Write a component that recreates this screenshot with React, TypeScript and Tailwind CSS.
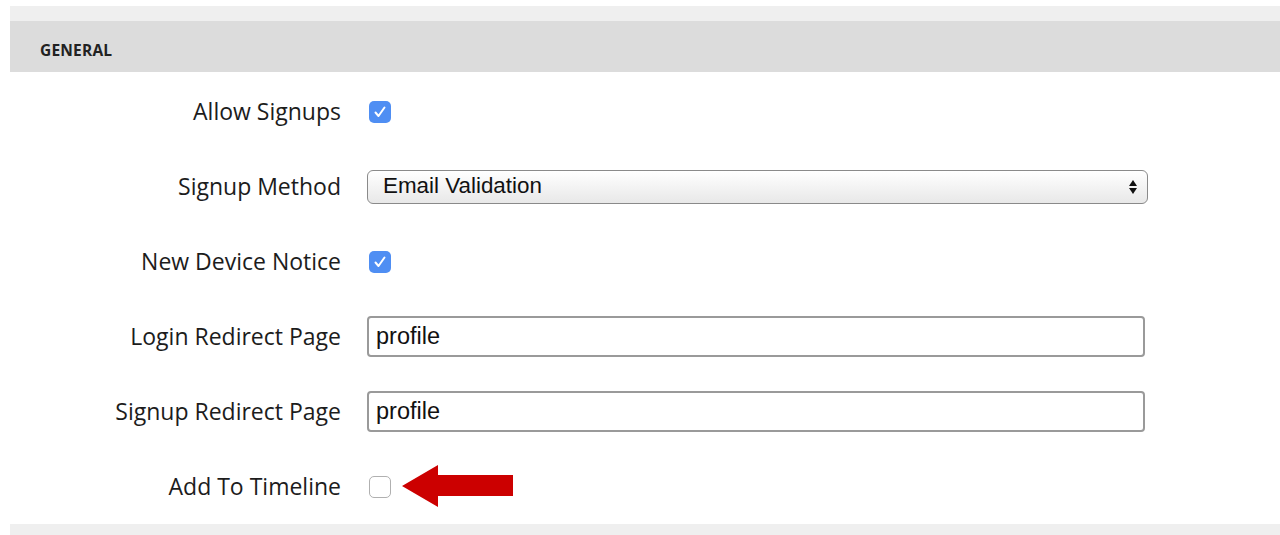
import React from "react";

const labelCls =
  "w-[331px] text-right text-[23px] text-[#1c1c1c] leading-none font-['Open_Sans',sans-serif]";

function Checked() {
  return (
    <div className="ml-[28px] w-[22px] h-[22px] rounded-[5px] bg-[#4f8ef3] flex items-center justify-center">
      <svg width="14" height="14" viewBox="0 0 14 14">
        <path d="M2.5 7.5 L5.5 11 L11.5 2.5" fill="none" stroke="white" strokeWidth="2" strokeLinecap="round" strokeLinejoin="round" />
      </svg>
    </div>
  );
}

export default function App() {
  return (
    <div className="w-full h-[535px] bg-white pt-[6px] pl-[10px] overflow-hidden">
      <div className="h-[15px] bg-[#efefef]" />
      <div className="h-[51px] bg-[#dcdcdc] flex items-center pl-[30px] pt-[8px]">
        <span className="text-[15.5px] font-bold text-[#222] font-['Open_Sans',sans-serif] tracking-[0.2px]">GENERAL</span>
      </div>
      <div className="pt-[2px]">
        <div className="h-[75px] flex items-center">
          <div className={labelCls}>Allow Signups</div>
          <Checked />
        </div>
        <div className="h-[75px] flex items-center">
          <div className={labelCls}>Signup Method</div>
          <div className="ml-[26px] w-[781px] h-[34px] rounded-[6px] border border-[#8a8a8a] bg-gradient-to-b from-white to-[#e8e8e8] flex items-center justify-between pl-[15px] pr-[9px]">
            <span className="text-[22.4px] text-[#111] font-['Liberation_Sans',Arial,sans-serif] leading-none">Email Validation</span>
            <svg width="10" height="16" viewBox="0 0 10 16">
              <path d="M5 1 L9 7 L1 7 Z" fill="#111" />
              <path d="M5 15 L9 9 L1 9 Z" fill="#111" />
            </svg>
          </div>
        </div>
        <div className="h-[75px] flex items-center">
          <div className={labelCls}>New Device Notice</div>
          <Checked />
        </div>
        <div className="h-[75px] flex items-center">
          <div className={labelCls}>Login Redirect Page</div>
          <div className="ml-[26px] w-[778px] h-[41px] rounded-[4px] border-2 border-[#9a9a9a] bg-white flex items-center pl-[7px]">
            <span className="text-[23.5px] text-[#111] font-['Liberation_Sans',Arial,sans-serif] leading-none">profile</span>
          </div>
        </div>
        <div className="h-[75px] flex items-center">
          <div className={labelCls}>Signup Redirect Page</div>
          <div className="ml-[26px] w-[778px] h-[41px] rounded-[4px] border-2 border-[#9a9a9a] bg-white flex items-center pl-[7px]">
            <span className="text-[23.5px] text-[#111] font-['Liberation_Sans',Arial,sans-serif] leading-none">profile</span>
          </div>
        </div>
        <div className="h-[75px] flex items-center">
          <div className={labelCls}>Add To Timeline</div>
          <div className="ml-[28px] w-[22px] h-[22px] rounded-[5px] border-[1.5px] border-[#b0b0b0] bg-white" />
          <svg className="ml-[11px]" width="112" height="44" viewBox="0 0 112 44">
            <path d="M0 21 L36 0 L36 10 L111 10 L111 31 L36 31 L36 42 Z" fill="#cc0000" />
          </svg>
        </div>
      </div>
      <div className="h-[12px] bg-[#efefef]" />
    </div>
  );
}
